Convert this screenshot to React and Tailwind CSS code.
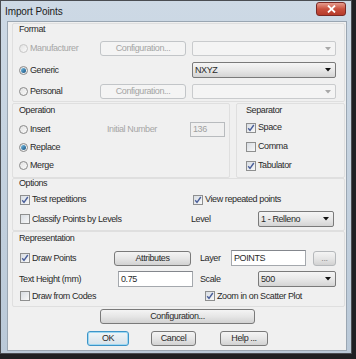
import React from 'react'

const Radio = ({ checked, disabled }) => (
  <span
    className={`flex h-[9px] w-[9px] shrink-0 items-center justify-center rounded-full border bg-gradient-to-br from-[#e2e2e2] to-[#fafafa] ${
      disabled ? 'border-[#c6c6c6]' : 'border-[#8a8a8a]'
    }`}
  >
    {checked && <span className="h-[5px] w-[5px] rounded-full bg-gradient-to-br from-[#79c2e8] to-[#14507e]" />}
  </span>
)

const Check = ({ checked }) => (
  <span className="flex h-[10px] w-[10px] shrink-0 items-center justify-center border border-[#8e8f8f] bg-gradient-to-br from-[#d8dde3] to-[#f8f8f8]">
    {checked && (
      <svg width="8" height="8" viewBox="0 0 8 8">
        <path d="M1.2 4.3 L3 6.4 L6.8 1" fill="none" stroke="#4a5f9a" strokeWidth="1.4" />
      </svg>
    )}
  </span>
)

const Button = ({ children, className = '', disabled, focused }) => (
  <div
    className={`flex shrink-0 items-center justify-center rounded-[3px] border ${
      disabled
        ? 'border-[#c2c5c8] bg-[#f4f4f4] text-[#a4a4a4]'
        : focused
          ? 'border-[#3c94c8] bg-gradient-to-b from-[#f0f5f8] to-[#d6e2ea] text-[#2a2a2a] shadow-[inset_0_0_0_1px_#9ed8f2]'
          : 'border-[#7a7a7a] bg-gradient-to-b from-[#f4f4f4] via-[#e6e6e6] to-[#d2d2d2] text-[#2a2a2a]'
    } ${className}`}
  >
    {children}
  </div>
)

const Select = ({ value, disabled, className = '' }) => (
  <div
    className={`flex shrink-0 items-center justify-between rounded-[2px] border pl-[2px] pr-[4px] ${
      disabled
        ? 'border-[#c9cbcd] bg-[#f4f4f4]'
        : 'border-[#7a7a7a] bg-gradient-to-b from-[#f5f5f5] via-[#e8e8e8] to-[#d4d4d4]'
    } ${className}`}
  >
    <span className="text-[#2a2a2a]">{value}</span>
    <svg width="6" height="4" viewBox="0 0 6 4">
      <path d="M0 0 H6 L3 3.5 Z" fill={disabled ? '#a8a8a8' : '#111'} />
    </svg>
  </div>
)

const Input = ({ value, disabled, className = '' }) => (
  <div
    className={`flex shrink-0 items-center border pl-[2px] ${
      disabled ? 'border-[#b8bbbe] bg-[#f0f0f0] text-[#a0a0a0]' : 'border-[#a4a8ad] border-t-[#84878d] bg-white text-[#2a2a2a]'
    } ${className}`}
  >
    {value}
  </div>
)

const Group = ({ className = '', children }) => (
  <div className={`box-border flex flex-col rounded-[2px] border border-[#dfdfdf] ${className}`}>{children}</div>
)

export default function App() {
  return (
    <div className="h-[359px] w-[356px] bg-[#1f2023] pb-[5px] pr-[4px] font-['Liberation_Sans',Arial,sans-serif] text-[9px] leading-none tracking-[-0.4px] text-[#2a2a2a]">
      <div className="box-border flex h-[354px] w-[352px] flex-col border border-[#4a4d52] bg-gradient-to-b from-[#cdd9e5] to-[#bac9d8]">
        {/* title bar */}
        <div className="flex h-[20px] shrink-0 items-start justify-between">
          <span className="mt-[6px] ml-[4px] text-[10px] tracking-[-0.1px] text-[#1b1b1b]">Import Points</span>
          <div className="mt-[1px] mr-[5px] flex h-[14px] w-[30px] items-center justify-center rounded-[3px] border border-[#7a2a25] bg-gradient-to-b from-[#e59b8e] via-[#c9503e] to-[#b53a2a]">
            <svg width="9" height="8" viewBox="0 0 9 8">
              <path d="M1 0.5 L8 7.5 M8 0.5 L1 7.5" stroke="#fff" strokeWidth="1.8" />
            </svg>
          </div>
        </div>

        {/* client area */}
        <div className="mb-[2px] ml-[6px] mr-[4px] flex flex-1 flex-col border border-[#9aa6b2] bg-[#f0f0f0] pl-[4px] pr-[1px] pt-[1px]">
          {/* Format */}
          <Group className="h-[79px]">
            <div className="flex h-[11px] items-center pl-[6px]">Format</div>
            <div className="mt-[6px] flex h-[15px] items-center">
              <div className="flex w-[87px] items-center gap-[2px] pl-[6px] text-[#a6a6a6]">
                <Radio disabled />
                <span>Manufacturer</span>
              </div>
              <Button disabled className="h-full w-[86px]">Configuration...</Button>
              <Select disabled className="ml-[6px] h-full w-[144px]" />
            </div>
            <div className="mt-[6px] flex h-[16px] items-center">
              <div className="flex w-[87px] items-center gap-[2px] pl-[6px]">
                <Radio checked />
                <span>Generic</span>
              </div>
              <div className="w-[92px]" />
              <Select value="NXYZ" className="h-full w-[144px]" />
            </div>
            <div className="mt-[6px] flex h-[15px] items-center">
              <div className="flex w-[87px] items-center gap-[2px] pl-[6px]">
                <Radio />
                <span>Personal</span>
              </div>
              <Button disabled className="h-full w-[86px]">Configuration...</Button>
              <Select disabled className="ml-[6px] h-full w-[144px]" />
            </div>
          </Group>

          {/* Operation + Separator */}
          <div className="mt-[1px] flex h-[75px] gap-[6px]">
            <Group className="h-full w-[218px]">
              <div className="flex h-[13px] items-center pl-[6px]">Operation</div>
              <div className="mt-[5px] flex h-[15px] items-center">
                <div className="flex w-[94px] items-center gap-[2px] pl-[6px]">
                  <Radio />
                  <span>Insert</span>
                </div>
                <span className="w-[83px] text-[#a6a6a6]">Initial Number</span>
                <Input disabled value="136" className="h-full w-[35px]" />
              </div>
              <div className="mt-[3px] flex h-[15px] items-center gap-[2px] pl-[6px]">
                <Radio checked />
                <span>Replace</span>
              </div>
              <div className="mt-[3px] flex h-[15px] items-center gap-[2px] pl-[6px]">
                <Radio />
                <span>Merge</span>
              </div>
            </Group>
            <Group className="h-full w-[109px]">
              <div className="flex h-[13px] items-center pl-[9px]">Separator</div>
              <div className="mt-[3px] flex h-[15px] items-center gap-[2px] pl-[9px]">
                <Check checked />
                <span>Space</span>
              </div>
              <div className="mt-[4px] flex h-[15px] items-center gap-[2px] pl-[9px]">
                <Check />
                <span>Comma</span>
              </div>
              <div className="mt-[4px] flex h-[15px] items-center gap-[2px] pl-[9px]">
                <Check checked />
                <span>Tabulator</span>
              </div>
            </Group>
          </div>

          {/* Options */}
          <Group className="h-[53px]">
            <div className="flex h-[9px] items-center pl-[6px]">Options</div>
            <div className="mt-[4px] flex h-[15px] items-center">
              <div className="flex w-[180px] items-center gap-[2px] pl-[7px]">
                <Check checked />
                <span>Test repetitions</span>
              </div>
              <div className="flex items-center gap-[2px]">
                <Check checked />
                <span>View repeated points</span>
              </div>
            </div>
            <div className="mt-[4px] flex h-[16px] items-center">
              <div className="flex w-[178px] items-center gap-[2px] pl-[7px]">
                <Check />
                <span>Classify Points by Levels</span>
              </div>
              <span className="w-[67px]">Level</span>
              <Select value="1 - Relleno" className="h-full w-[76px]" />
            </div>
          </Group>

          {/* Representation */}
          <Group className="h-[76px]">
            <div className="flex h-[13px] items-center pl-[6px]">Representation</div>
            <div className="mt-[5px] flex h-[16px] items-center">
              <div className="flex w-[101px] items-center gap-[2px] pl-[7px]">
                <Check checked />
                <span>Draw Points</span>
              </div>
              <Button className="h-[15px] w-[77px]">Attributes</Button>
              <span className="ml-[9px] w-[31px]">Layer</span>
              <Input value="POINTS" className="h-full w-[75px]" />
              <Button className="ml-[7px] h-[15px] w-[23px] !border-[#b5b8bb] !text-[#8a8a8a]">...</Button>
            </div>
            <div className="mt-[5px] flex h-[16px] items-center">
              <span className="w-[105px] pl-[6px]">Text Height (mm)</span>
              <Input value="0.75" className="h-full w-[75px]" />
              <span className="ml-[7px] w-[58px]">Scale</span>
              <Select value="500" className="h-full w-[78px]" />
            </div>
            <div className="mt-[2px] flex h-[14px] items-center">
              <div className="flex w-[192px] items-center gap-[2px] pl-[7px]">
                <Check />
                <span>Draw from Codes</span>
              </div>
              <div className="flex items-center gap-[2px]">
                <Check checked />
                <span>Zoom in on Scatter Plot</span>
              </div>
            </div>
          </Group>

          {/* bottom buttons */}
          <div className="mt-[2px] flex h-[15px] pl-[88px]">
            <Button className="h-full w-[155px]">Configuration...</Button>
          </div>
          <div className="mt-[7px] flex h-[15px] pl-[75px]">
            <Button focused className="h-full w-[42px]">OK</Button>
            <Button className="ml-[22px] h-full w-[45px]">Cancel</Button>
            <Button className="ml-[24px] h-full w-[48px]">Help ...</Button>
          </div>
        </div>
      </div>
    </div>
  )
}
